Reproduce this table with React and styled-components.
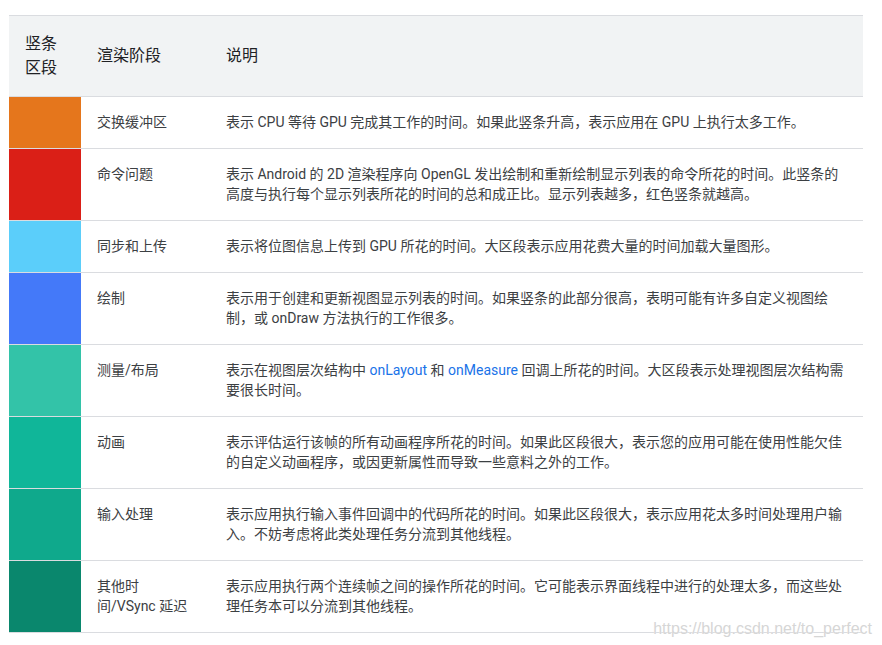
import React from "react";
import styled, { createGlobalStyle } from "styled-components";

const GlobalStyle = createGlobalStyle`
  html, body {
    margin: 0;
    padding: 0;
    background: #fff;
  }
  body {
    font-family: Roboto, "Noto Sans CJK SC", sans-serif;
    color: #3c4043;
  }
`;

const Page = styled.div`
  position: relative;
  padding: 15px 19px 0 9px;
  width: 882px;
  height: 645px;
  box-sizing: border-box;
  overflow: hidden;
`;

const Table = styled.table`
  width: 854px;
  border-collapse: collapse;
  table-layout: fixed;
  border-top: 1px solid #dadce0;
`;

const HeadCell = styled.th`
  background: #f1f3f4;
  color: #202124;
  font-size: 16px;
  font-weight: 400;
  line-height: 24px;
  text-align: left;
  vertical-align: middle;
  padding: 16px;
  border-bottom: 1px solid #dadce0;
`;

const Cell = styled.td`
  font-size: 14px;
  line-height: 20px;
  vertical-align: top;
  padding: 15px 16px 16px 16px;
  border-bottom: 1px solid #dadce0;
`;

const Swatch = styled.td`
  background: ${(p) => p.$color};
  padding: 0;
  border-bottom: 1px solid #dadce0;
`;

const Code = styled.span`
  color: #1a73e8;
`;

const Watermark = styled.div`
  position: absolute;
  right: 10px;
  bottom: 7px;
  font-family: "Liberation Sans", Arial, sans-serif;
  font-size: 16px;
  color: #d6d6d6;
  text-shadow: 0 0 1px #fff;
  pointer-events: none;
`;

const stages = [
  {
    color: "#e5761c",
    name: "交换缓冲区",
    desc: "表示 CPU 等待 GPU 完成其工作的时间。如果此竖条升高，表示应用在 GPU 上执行太多工作。",
  },
  {
    color: "#da1f17",
    name: "命令问题",
    desc: "表示 Android 的 2D 渲染程序向 OpenGL 发出绘制和重新绘制显示列表的命令所花的时间。此竖条的高度与执行每个显示列表所花的时间的总和成正比。显示列表越多，红色竖条就越高。",
  },
  {
    color: "#5bcefa",
    name: "同步和上传",
    desc: "表示将位图信息上传到 GPU 所花的时间。大区段表示应用花费大量的时间加载大量图形。",
  },
  {
    color: "#4479f9",
    name: "绘制",
    desc: "表示用于创建和更新视图显示列表的时间。如果竖条的此部分很高，表明可能有许多自定义视图绘制，或 onDraw 方法执行的工作很多。",
  },
  {
    color: "#33c3a8",
    name: "测量/布局",
    desc: (
      <>
        表示在视图层次结构中 <Code>onLayout</Code> 和 <Code>onMeasure</Code>{" "}
        回调上所花的时间。大区段表示处理视图层次结构需要很长时间。
      </>
    ),
  },
  {
    color: "#10b699",
    name: "动画",
    desc: "表示评估运行该帧的所有动画程序所花的时间。如果此区段很大，表示您的应用可能在使用性能欠佳的自定义动画程序，或因更新属性而导致一些意料之外的工作。",
  },
  {
    color: "#0fa98c",
    name: "输入处理",
    desc: "表示应用执行输入事件回调中的代码所花的时间。如果此区段很大，表示应用花太多时间处理用户输入。不妨考虑将此类处理任务分流到其他线程。",
  },
  {
    color: "#0a876d",
    name: "其他时间/VSync 延迟",
    desc: "表示应用执行两个连续帧之间的操作所花的时间。它可能表示界面线程中进行的处理太多，而这些处理任务本可以分流到其他线程。",
  },
];

export default function App() {
  return (
    <>
      <GlobalStyle />
      <Page>
        <Table>
          <colgroup>
            <col style={{ width: 72 }} />
            <col style={{ width: 129 }} />
            <col />
          </colgroup>
          <thead>
            <tr>
              <HeadCell>竖条区段</HeadCell>
              <HeadCell>渲染阶段</HeadCell>
              <HeadCell>说明</HeadCell>
            </tr>
          </thead>
          <tbody>
            {stages.map((stage) => (
              <tr key={stage.name}>
                <Swatch $color={stage.color} />
                <Cell>{stage.name}</Cell>
                <Cell>{stage.desc}</Cell>
              </tr>
            ))}
          </tbody>
        </Table>
        <Watermark>https://blog.csdn.net/to_perfect</Watermark>
      </Page>
    </>
  );
}
